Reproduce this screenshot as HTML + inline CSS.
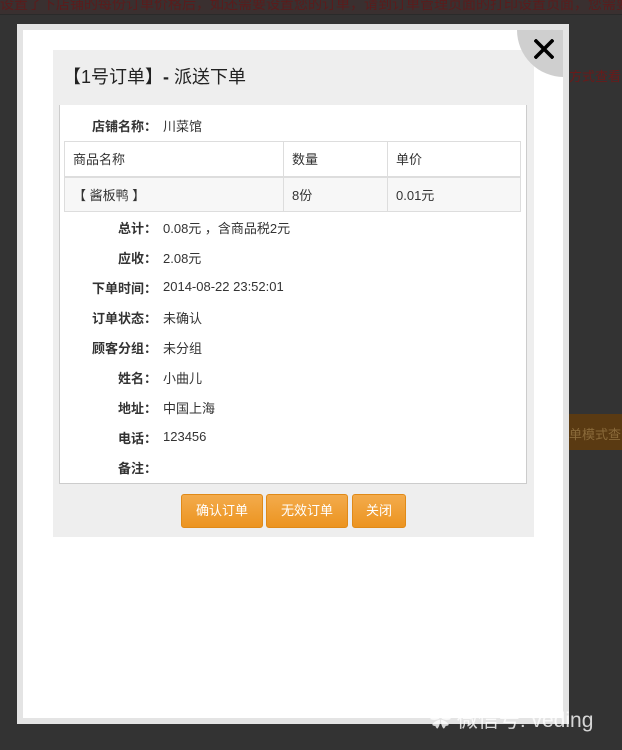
<!DOCTYPE html>
<html><head><meta charset="utf-8"><style>
*{margin:0;padding:0;box-sizing:border-box}
body{width:622px;height:750px;background:#333;position:relative;overflow:hidden;font-family:"Liberation Sans","Noto Sans CJK SC",sans-serif;font-size:13px;color:#333}
.a{position:absolute}
.lbl{position:absolute;width:100px;left:57px;text-align:right;font-weight:bold;color:#333}
.val{position:absolute;left:163px;color:#333}
.btn{position:absolute;top:494px;height:34px;background:linear-gradient(#f3ab4c,#ec9420);border:1px solid #e08a18;border-radius:3px;color:#fff;text-align:center;line-height:32px;font-size:13px}
td{border:1px solid #ddd;padding:0 8px;height:35px;font-size:13px;color:#333}
</style></head><body>
<div class="a" style="left:0;top:0;width:622px;height:14px;background:#3a3030;overflow:hidden"><div style="font-size:14px;color:#5a1c1c;white-space:nowrap;margin-top:-6px">设置了下店铺的每份订单价格后，如还需要设置您的订单，请到订单管理页面的打印设置页面，您需要的如下</div></div>
<div class="a" style="left:0;top:14px;width:622px;height:1px;background:#2a2a2a"></div>
<div class="a" style="left:569px;top:66px;width:53px;overflow:hidden;font-size:13px;color:#6a1a1a;white-space:nowrap">方式查看</div>
<div class="a" style="left:569px;top:414px;width:53px;height:36px;background:#5a3a12;overflow:hidden"><div style="font-size:13px;color:#8a6a3a;white-space:nowrap;margin-top:10px">单模式查</div></div>
<div class="a" style="left:17px;top:24px;width:552px;height:700px;background:#e4e4e4"></div>
<div class="a" style="left:23px;top:30px;width:540px;height:688px;background:#fff"></div>
<div class="a" style="left:53px;top:50px;width:481px;height:487px;background:#eee"></div>
<div class="a" style="left:23px;top:30px;width:540px;height:100px;overflow:hidden">
  <div class="a" style="left:494px;top:-47px;width:94px;height:94px;border-radius:50%;background:#cfcfcf"></div>
  <svg class="a" style="left:511px;top:9px" width="20" height="20" viewBox="0 0 20 20"><path d="M2 2L18 18M18 2L2 18" stroke="#000" stroke-width="3.6" stroke-linecap="square"/></svg>
</div>
<div class="a" style="left:63px;top:63px;font-size:18px;color:#222">【1号订单】<b>-</b> 派送下单</div>
<div class="a" style="left:59px;top:105px;width:468px;height:379px;background:#fff;border:1px solid #ccc;border-top:none"></div>
<div class="lbl" style="top:116px">店铺名称：</div><div class="val" style="top:116px">川菜馆</div>
<table class="a" style="left:64px;top:141px;width:457px;border-collapse:collapse">
<tr><td style="width:219px">商品名称</td><td style="width:104px">数量</td><td>单价</td></tr>
<tr style="background:#f7f7f7"><td style="border-top:2px solid #ddd">【 酱板鸭 】</td><td style="border-top:2px solid #ddd">8份</td><td style="border-top:2px solid #ddd">0.01元</td></tr>
</table>
<div class="lbl" style="top:218px">总计：</div><div class="val" style="top:218px">0.08元 ，含商品税2元</div>
<div class="lbl" style="top:248px">应收：</div><div class="val" style="top:248px">2.08元</div>
<div class="lbl" style="top:278px">下单时间：</div><div class="val" style="top:279px">2014-08-22 23:52:01</div>
<div class="lbl" style="top:308px">订单状态：</div><div class="val" style="top:308px">未确认</div>
<div class="lbl" style="top:338px">顾客分组：</div><div class="val" style="top:338px">未分组</div>
<div class="lbl" style="top:368px">姓名：</div><div class="val" style="top:368px">小曲儿</div>
<div class="lbl" style="top:398px">地址：</div><div class="val" style="top:398px">中国上海</div>
<div class="lbl" style="top:428px">电话：</div><div class="val" style="top:429px">123456</div>
<div class="lbl" style="top:458px">备注：</div>
<div class="btn" style="left:181px;width:82px">确认订单</div>
<div class="btn" style="left:266px;width:82px">无效订单</div>
<div class="btn" style="left:352px;width:54px">关闭</div>
<div class="a" style="left:430px;top:704px;font-size:21px;color:rgba(255,255,255,0.8);white-space:nowrap">✿ 微信号: veding</div>
</body></html>
